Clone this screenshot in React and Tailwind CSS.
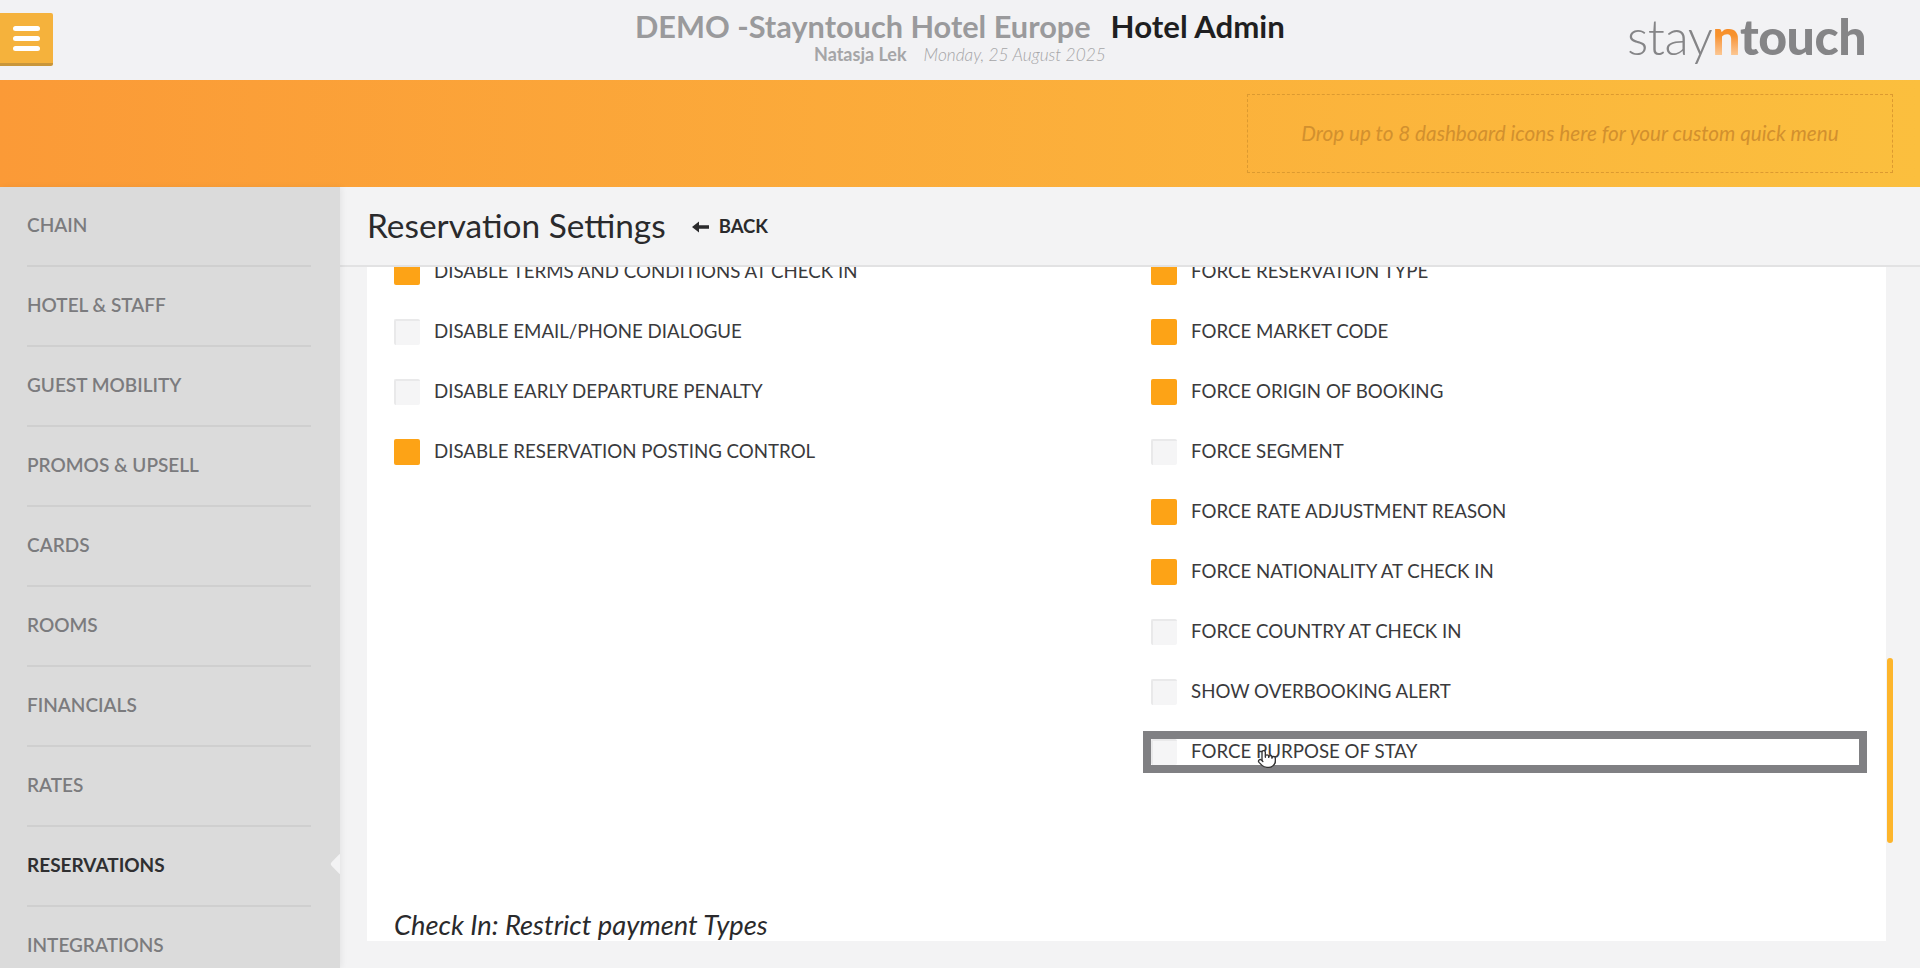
import React from 'react';
import { Pointer } from 'lucide-react';

const NAV_ITEMS = [
  'CHAIN',
  'HOTEL & STAFF',
  'GUEST MOBILITY',
  'PROMOS & UPSELL',
  'CARDS',
  'ROOMS',
  'FINANCIALS',
  'RATES',
  'RESERVATIONS',
  'INTEGRATIONS',
];

const LEFT_ROWS = [
  { label: 'DISABLE TERMS AND CONDITIONS AT CHECK IN', on: true },
  { label: 'DISABLE EMAIL/PHONE DIALOGUE', on: false },
  { label: 'DISABLE EARLY DEPARTURE PENALTY', on: false },
  { label: 'DISABLE RESERVATION POSTING CONTROL', on: true },
];

const RIGHT_ROWS = [
  { label: 'FORCE RESERVATION TYPE', on: true },
  { label: 'FORCE MARKET CODE', on: true },
  { label: 'FORCE ORIGIN OF BOOKING', on: true },
  { label: 'FORCE SEGMENT', on: false },
  { label: 'FORCE RATE ADJUSTMENT REASON', on: true },
  { label: 'FORCE NATIONALITY AT CHECK IN', on: true },
  { label: 'FORCE COUNTRY AT CHECK IN', on: false },
  { label: 'SHOW OVERBOOKING ALERT', on: false },
  { label: 'FORCE PURPOSE OF STAY', on: false, focused: true },
];

function Row({ label, on, focused }) {
  return (
    <div className="h-[60px] flex items-center">
      <div className={`relative w-full h-[42px] border-8 flex items-center ${focused ? 'border-[#808083]' : 'border-transparent'}`}>
        <span
          className={`w-[26px] h-[26px] shrink-0 rounded-[2px] ${
            on ? 'bg-[#fda316]' : 'bg-[#f5f5f6] border-t-2 border-l-2 border-[#e9e9ea]'
          }`}
        />
        <span className="ml-[14px] text-[18.7px] leading-none text-[#3a3a3c] whitespace-nowrap -mt-[1px]">{label}</span>
        {focused && (
          <Pointer className="absolute left-[106px] top-[10px] w-[20px] h-[20px] text-[#333] fill-white" strokeWidth={1.6} />
        )}
      </div>
    </div>
  );
}

export default function App() {
  return (
    <div className="w-[1920px] h-[968px] overflow-hidden flex flex-col bg-[#f3f3f4] font-[Lato,sans-serif]">
      <header className="h-20 shrink-0 relative flex items-start bg-[#f2f2f4]">
        <button
          type="button"
          className="mt-[13px] w-[53px] h-[53px] bg-[#f5b23c] border-b-[3px] border-[#c9963a] flex flex-col items-center justify-center gap-[5px] rounded-r-[2px]"
        >
          <span className="w-[27px] h-[5px] bg-white rounded-full" />
          <span className="w-[27px] h-[5px] bg-white rounded-full" />
          <span className="w-[27px] h-[5px] bg-white rounded-full" />
        </button>
        <div className="absolute left-[635px] top-[8px] w-[680px]">
          <div className="flex items-baseline leading-[36px] font-bold whitespace-nowrap">
            <span className="text-[30.7px] text-[#9a9a9c]">DEMO -Stayntouch Hotel Europe</span>
            <span className="ml-[20px] text-[31.2px] text-[#1f1f21]">Hotel Admin</span>
          </div>
          <div className="flex items-baseline leading-[18px] text-[#a5a5a7] whitespace-nowrap pl-[179px]">
            <span className="text-[18px] font-bold">Natasja Lek</span>
            <span className="ml-[17px] text-[17.3px] italic font-light">Monday, 25 August 2025</span>
          </div>
        </div>
        <div className="ml-auto mr-[54px] mt-[6px] flex items-baseline text-[50px] leading-[60px] tracking-[-0.5px] text-[#858587] whitespace-nowrap">
          <span className="font-light">stay</span>
          <span className="font-black bg-gradient-to-b from-[#f5811f] via-[#f7932e] to-[#fbe3c0] bg-clip-text text-transparent">n</span>
          <span className="font-black">touch</span>
        </div>
      </header>

      <div className="h-[107px] shrink-0 flex justify-end items-center pr-[27px] bg-gradient-to-r from-[#fb9a37] to-[#fbbf3e]">
        <div className="w-[646px] h-[79px] border border-dashed border-[#dc9a30] flex items-center justify-center">
          <span className="text-[20.7px] italic font-normal text-[#d2902e] whitespace-nowrap">
            Drop up to 8 dashboard icons here for your custom quick menu
          </span>
        </div>
      </div>

      <div className="flex-1 min-h-0 flex">
        <nav className="w-[340px] shrink-0 relative overflow-hidden bg-[#dbdbdb] pl-[27px] pr-[29px] shadow-[2px_0_6px_rgba(0,0,0,0.06)]">
          {NAV_ITEMS.map((item) => (
            <div
              key={item}
              className={`h-20 shrink-0 flex items-center pb-[2px] border-b-2 border-[#cfcfcf] text-[19px] whitespace-nowrap ${
                item === 'RESERVATIONS' ? 'font-bold text-[#2f2f31]' : 'font-semibold text-[#7b7b7e]'
              }`}
            >
              {item}
            </div>
          ))}
          <span className="absolute right-[-9px] top-[669px] w-4 h-4 rotate-45 rounded-[3px] bg-[#f3f3f4]" />
        </nav>

        <main className="flex-1 min-w-0 flex flex-col">
          <div className="h-20 shrink-0 flex items-center pl-[27px] border-b-2 border-[#e2e2e3]">
            <h1 className="text-[33.4px] font-normal text-[#2a2a2c] whitespace-nowrap -mt-[2px]">Reservation Settings</h1>
            <div className="ml-[26px] mt-[2px] flex items-center text-[#2a2a2c]">
              <svg width="17" height="12" viewBox="0 0 17 12" className="mr-[10px]">
                <path d="M0 6 L7 0.5 V4.2 H17 V7.8 H7 V11.5 Z" fill="currentColor" />
              </svg>
              <span className="text-[18.5px] font-bold">BACK</span>
            </div>
          </div>

          <div className="relative ml-[27px] mr-[34px] mb-[27px] flex-1 min-h-0">
            <section className="h-full overflow-hidden bg-white">
              <div className="-mt-[25px] pl-[19px] flex">
                <div className="w-[757px] shrink-0">
                  {LEFT_ROWS.map((row) => (
                    <Row key={row.label} {...row} />
                  ))}
                </div>
                <div className="w-[724px] shrink-0">
                  {RIGHT_ROWS.map((row) => (
                    <Row key={row.label} {...row} />
                  ))}
                </div>
              </div>
              <h2 className="mt-[125px] pl-[27px] text-[27.3px] leading-[36px] italic font-normal text-[#2a2a2c] whitespace-nowrap">
                Check In: Restrict payment Types
              </h2>
            </section>
            <span className="absolute right-[-7px] top-[391px] w-[6px] h-[185px] rounded-full bg-[#fdb52b]" />
          </div>
        </main>
      </div>
    </div>
  );
}
